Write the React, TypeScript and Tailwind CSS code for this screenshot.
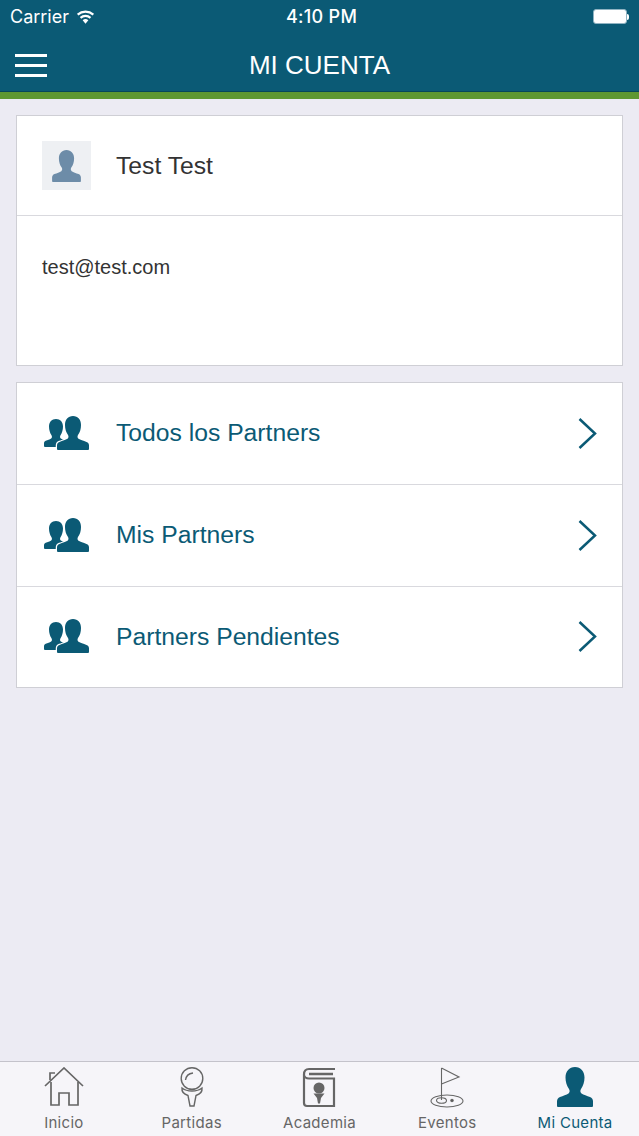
import React from "react";

const TEAL = "#0b5a75";

/* Single person silhouette, also used for the active tab */
const PersonIcon = ({ className, fill }: { className?: string; fill: string }) => (
  <svg viewBox="0 0 36 40" className={className}>
    <path
      fill={fill}
      d="M18 0c5.800 0 9.500 4.500 9.500 10.500 0 4.500-1.300 8.500-3.500 11.500-1 1.500-.8 3.500.5 4.500 2 1.500 5.500 2.300 8.500 3.500 2 .8 3 2.300 3 4.500V39a1 1 0 0 1-1 1H1a1 1 0 0 1-1-1v-4.500c0-2.200 1-3.700 3-4.500 3-1.200 6.500-2 8.500-3.500 1.300-1 1.500-3 .5-4.500-2.200-3-3.500-7-3.500-11.500C8.500 4.500 12.200 0 18 0z"
    />
  </svg>
);

const PartnersIcon = () => (
  <svg viewBox="0 0 46 36" className="h-[36px] w-[46px]">
    <path
      fill={TEAL}
      d="M12 3C16.300 3 19 6 19 10.500 19 14 18 17 16.500 19.200 15.800 20.300 15.900 21.800 16.900 22.500 18.300 23.500 21 24.200 23 25.100L24 31H1Q0 31 0 30V27.500C0 26.200.6 25.300 1.700 24.800 3.700 23.900 5.700 23.500 7.100 22.500 8.100 21.800 8.200 20.300 7.500 19.200 6 17 5 14 5 10.500 5 6 7.700 3 12 3Z"
    />
    {/* white halo separates the front figure from the one behind */}
    <path
      fill={TEAL}
      stroke="white"
      strokeWidth="2.500"
      className="[paint-order:stroke]"
      d="M29 0c5 0 8 3.500 8 9 0 4-1 7-3 10-.8 1.200-.6 3 .5 3.800 1.700 1.200 5 2 8 3.200 1.700.7 2.500 1.800 2.500 3.500V33a1 1 0 0 1-1 1H14a1 1 0 0 1-1-1v-3.500c0-1.700.8-2.800 2.500-3.500 3-1.200 6.300-2 8-3.200 1.100-.8 1.300-2.600.5-3.800-2-3-3-6-3-10C21 3.500 24 0 29 0z"
    />
  </svg>
);

const Chevron = () => (
  <svg viewBox="0 0 20 32" className="h-[32px] w-[20px]">
    <path d="M1.500 1 17 15.500 1.500 30" fill="none" stroke={TEAL} strokeWidth="2.500" />
  </svg>
);

const HomeIcon = () => (
  <svg viewBox="0 0 40 40" className="h-[40px] w-[40px]" fill="none" stroke="#666" strokeWidth="1.700">
    <path d="M1 19 20 1l19 18" />
    <path d="M6 13V6h5" />
    <path d="M7 15v23h8V26h10v12h9V15" />
  </svg>
);

const TeeIcon = () => (
  <svg viewBox="0 0 24 40" className="h-[40px] w-[24px]" fill="none" stroke="#666" strokeWidth="1.400">
    <circle cx="12" cy="11.500" r="10.800" />
    <path d="M5.500 13c.5-4 3.500-6.500 7.500-7" />
    <path d="M2 21c2.500 2 6 3 10 3s7.500-1 10-3c.4 3-1.500 6-6 7.500L14 39h-4L8 28.500C3.500 27 1.600 24 2 21z" />
  </svg>
);

const BookIcon = () => (
  <svg viewBox="0 0 34 42" className="h-[42px] w-[34px]">
    <path
      fill="none"
      stroke="#666"
      strokeWidth="2.200"
      d="M33 2H7C3.500 2 2 4.500 2 7.500V36c0 2 1 3 3 3h27V11.500H7C4 11.500 2 9.500 2 7.500"
    />
    <path stroke="#666" strokeWidth="2.500" d="M7 7h24" />
    <circle cx="17" cy="21" r="5.500" fill="#666" />
    <path fill="#666" d="M11.500 26.500h11L19 31l-1 5.500h-2L15 31z" />
  </svg>
);

const FlagIcon = () => (
  <svg viewBox="0 0 34 42" className="h-[42px] w-[34px]" fill="none" stroke="#666" strokeWidth="1.100">
    <path d="M11.500 1v32" />
    <path d="M11.500 1 29 10l-17.500 7" />
    <ellipse cx="17" cy="34" rx="16" ry="6" />
    <ellipse cx="11.500" cy="33.500" rx="5" ry="2.800" />
    <circle cx="22" cy="33.500" r="1.200" fill="#555" />
  </svg>
);

const WifiIcon = () => (
  <svg viewBox="0 0 20 14" className="h-[14px] w-[19px]" fill="white">
    <path d="M10 14 7 10.500a4.500 4.500 0 0 1 6 0zM5.500 8.800 4 7a9 9 0 0 1 12 0l-1.500 1.800a6.700 6.700 0 0 0-9 0zM2.500 5.300 1 3.500a14 14 0 0 1 18 0l-1.500 1.800a11.600 11.600 0 0 0-15 0z" />
  </svg>
);

const partnerRows = ["Todos los Partners", "Mis Partners", "Partners Pendientes"];

const tabs = [
  { label: "Inicio", icon: <HomeIcon /> },
  { label: "Partidas", icon: <TeeIcon /> },
  { label: "Academia", icon: <BookIcon /> },
  { label: "Eventos", icon: <FlagIcon /> },
  { label: "Mi Cuenta", icon: <PersonIcon fill={TEAL} className="h-[40px] w-[36px]" />, active: true },
];

export default function App() {
  return (
    <div className="flex h-[1136px] w-[639px] flex-col overflow-hidden bg-[#ecebf3] font-['Liberation_Sans',sans-serif]">
      {/* Status bar + nav */}
      <header className="h-[92px] shrink-0 border-b border-[#07465c] bg-[#0b5a75] text-white">
        <div className="flex h-[33px] items-center justify-between pl-[10px] pr-[10px] font-['Inter',sans-serif]">
          <div className="flex w-[204px] items-center gap-[7px]">
            <span className="text-[18px] leading-none">Carrier</span>
            <WifiIcon />
          </div>
          <span className="text-[18px] font-medium leading-none tracking-[0.3px]">4:10 PM</span>
          <div className="flex w-[200px] items-center justify-end">
            <div className="h-[15px] w-[34px] rounded-[3px] border border-[#8fb3c2] bg-white" />
            <div className="h-[6px] w-[2px] rounded-r-sm bg-white" />
          </div>
        </div>
        <div className="relative flex h-[58px] items-center justify-center pt-[6px]">
          <div className="absolute left-[15px] top-[21px] flex w-[32px] flex-col gap-[7px]">
            <div className="h-[3px] bg-white" />
            <div className="h-[3px] bg-white" />
            <div className="h-[3px] bg-white" />
          </div>
          <h1 className="text-[26px] font-normal leading-none">MI CUENTA</h1>
        </div>
      </header>
      <div className="h-[7px] shrink-0 bg-[#5f9732]" />

      <main className="flex flex-1 flex-col gap-[16px] px-[16px] pt-[16px]">
        {/* Profile */}
        <section className="h-[251px] border border-[#cfcfd5] bg-white">
          <div className="flex h-[100px] items-center gap-[25px] border-b border-[#d9d9de] pl-[25px]">
            <div className="flex h-[49px] w-[49px] items-end justify-center bg-[#eef0f3] pb-[8px]">
              <PersonIcon fill="#6d8ca8" className="h-[32px] w-[29px]" />
            </div>
            <span className="pt-[2px] text-[24.700px] leading-none text-[#333]">Test Test</span>
          </div>
          <div className="pl-[25px] pt-[41px] text-[20px] leading-[20px] text-[#333]">test@test.com</div>
        </section>

        {/* Partner lists */}
        <section className="border border-[#cfcfd5] bg-white">
          {partnerRows.map((label, i) => (
            <div
              key={label}
              className={`flex items-center pl-[27px] pr-[24px] ${i < 2 ? "h-[102px] border-b border-[#d9d9de]" : "h-[100px]"}`}
            >
              <PartnersIcon />
              <span className="ml-[26px] flex-1 text-[24.700px] leading-none text-[#0b5a75]">{label}</span>
              <Chevron />
            </div>
          ))}
        </section>
      </main>

      {/* Tab bar */}
      <nav className="flex h-[75px] shrink-0 border-t border-[#c4c3cb] bg-[#f6f5f9] font-['Inter',sans-serif]">
        {tabs.map((tab) => (
          <div key={tab.label} className="flex flex-1 flex-col items-center pt-[5px]">
            <div className="flex h-[43px] items-start justify-center">{tab.icon}</div>
            <span
              className={`mt-[4px] text-[15px] leading-[18px] tracking-[0.3px] ${tab.active ? "text-[#0b5a75]" : "text-[#666]"}`}
            >
              {tab.label}
            </span>
          </div>
        ))}
      </nav>
    </div>
  );
}
